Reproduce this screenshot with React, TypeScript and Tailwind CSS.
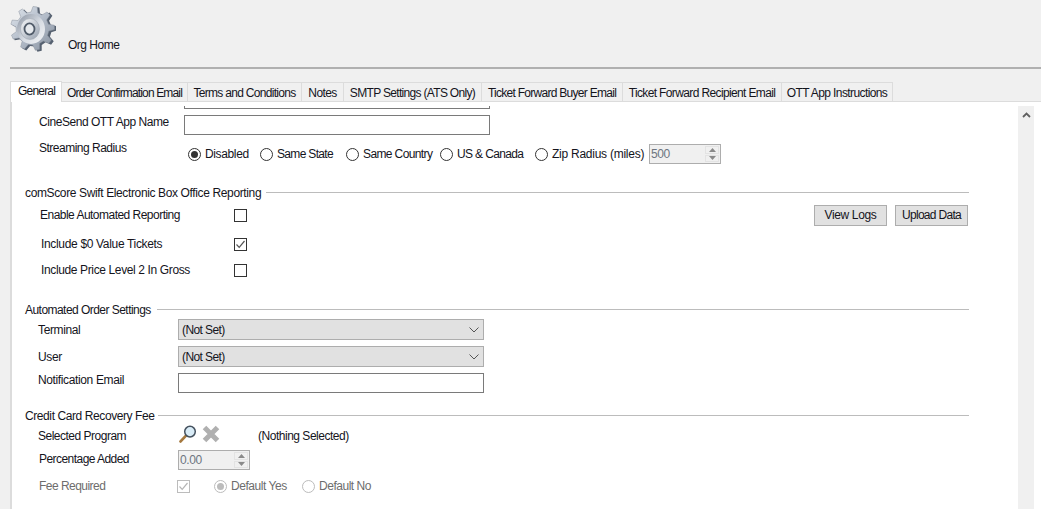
import React from "react";

const tabs: [string, string, string][] = [
  ["Order Confirmation Email", "w-[126px]", "tracking-[-0.85px]"],
  ["Terms and Conditions", "w-[114px]", "tracking-[-0.7px]"],
  ["Notes", "w-[42px]", "tracking-[-0.6px]"],
  ["SMTP Settings (ATS Only)", "w-[138px]", "tracking-[-0.68px]"],
  ["Ticket Forward Buyer Email", "w-[141px]", "tracking-[-0.72px]"],
  ["Ticket Forward Recipient Email", "w-[159px]", "tracking-[-0.63px]"],
  ["OTT App Instructions", "w-[111px]", "tracking-[-0.6px]"],
];

function gearPath(cx: number, cy: number, r1: number, r2: number, n: number, rot: number) {
  const pts: string[] = [];
  for (let i = 0; i < n; i++) {
    const a = rot + (i * 2 * Math.PI) / n;
    const s = (2 * Math.PI) / n;
    const p = (ang: number, r: number) => `${(cx + r * Math.cos(ang)).toFixed(2)} ${(cy + r * Math.sin(ang)).toFixed(2)}`;
    pts.push(p(a - s * 0.3, r1), p(a - s * 0.14, r2), p(a + s * 0.14, r2), p(a + s * 0.3, r1));
  }
  return "M" + pts.join(" L") + " Z";
}

function Gear() {
  return (
    <svg width="46" height="48" viewBox="0 0 46 48" className="shrink-0">
      <defs>
        <linearGradient id="g1" x1="0" y1="0" x2="1" y2="1">
          <stop offset="0" stopColor="#dfe5ec" />
          <stop offset="0.5" stopColor="#b3bcc9" />
          <stop offset="1" stopColor="#87919f" />
        </linearGradient>
        <linearGradient id="g2" x1="0" y1="0" x2="1" y2="1">
          <stop offset="0" stopColor="#8a93a1" />
          <stop offset="0.55" stopColor="#d8dde4" />
          <stop offset="1" stopColor="#f4f5f7" />
        </linearGradient>
        <linearGradient id="g3" x1="0" y1="0" x2="1" y2="1">
          <stop offset="0" stopColor="#f7f8fa" />
          <stop offset="1" stopColor="#96a0ae" />
        </linearGradient>
      </defs>
      <path d={gearPath(24.5, 24.5, 17, 22.5, 9, -1.45)} fill="#566170" />
      <path d={gearPath(22.5, 23.5, 16.5, 22, 9, -1.45)} fill="url(#g1)" stroke="#8a929e" strokeWidth="0.5" />
      <ellipse cx="21" cy="24" rx="14" ry="15" fill="url(#g2)" />
      <ellipse cx="20" cy="24" rx="9.5" ry="10.5" fill="url(#g3)" stroke="#a2a9b4" strokeWidth="0.6" />
      <ellipse cx="19.5" cy="24" rx="5" ry="5.6" fill="#e6e9ed" stroke="#4f5a68" strokeWidth="1.8" />
    </svg>
  );
}

function Radio({ on, dim }: { on?: boolean; dim?: boolean }) {
  return (
    <span className={`w-[13px] h-[13px] shrink-0 rounded-full border flex items-center justify-center bg-white ${dim ? "border-[#bcbcbc]" : "border-[#333333]"}`}>
      {on && <span className={`w-[7px] h-[7px] rounded-full ${dim ? "bg-[#bcbcbc]" : "bg-[#333333]"}`} />}
    </span>
  );
}

function Check({ on, dim }: { on?: boolean; dim?: boolean }) {
  return (
    <span className={`w-[13px] h-[13px] shrink-0 border flex items-center justify-center bg-white ${dim ? "border-[#bcbcbc]" : "border-[#333333]"}`}>
      {on && (
        <svg width="11" height="11" viewBox="0 0 11 11" fill="none">
          <path d="M1.5 5.5 L4.2 8.3 L9.5 2" stroke={dim ? "#b5b5b5" : "#555555"} strokeWidth="1.2" />
        </svg>
      )}
    </span>
  );
}

function Spinner({ value }: { value: string }) {
  return (
    <div className="w-[72px] h-[20px] border border-[#adadad] bg-[#f0f0f0] flex items-center shrink-0">
      <span className="flex-1 pl-[1px] text-[#6d7580]">{value}</span>
      <span className="w-[14px] h-[16px] mr-[1px] flex flex-col gap-[1px]">
        <span className="flex-1 border border-[#e3e3e3] flex items-center justify-center">
          <svg width="7" height="4" viewBox="0 0 7 4"><path d="M0 4 L3.5 0 L7 4 Z" fill="#8a8a8a" /></svg>
        </span>
        <span className="flex-1 border border-[#e3e3e3] flex items-center justify-center">
          <svg width="7" height="4" viewBox="0 0 7 4"><path d="M0 0 L3.5 4 L7 0 Z" fill="#8a8a8a" /></svg>
        </span>
      </span>
    </div>
  );
}

function Heading({ text, mt, lineGap, track }: { text: string; mt: string; lineGap: string; track?: string }) {
  return (
    <div className={`flex items-center h-[14px] ml-[13px] w-[944px] ${mt}`}>
      <span className={`whitespace-nowrap ${track ?? ""}`}>{text}</span>
      <span className={`flex-1 h-px -mt-[2px] bg-[#bcbcbc] ${lineGap}`} />
    </div>
  );
}

function Select() {
  return (
    <div className="w-[306px] h-[21px] border border-[#adadad] bg-[#e1e1e1] flex items-center pl-[3px] pr-[4px] justify-between">
      <span className="tracking-[-0.6px]">(Not Set)</span>
      <svg width="10" height="6" viewBox="0 0 10 6" fill="none"><path d="M0.5 0.5 L5 5 L9.5 0.5" stroke="#555555" strokeWidth="1" /></svg>
    </div>
  );
}

function WinButton({ text, track }: { text: string; track?: string }) {
  return (
    <div className={`w-[73px] h-[21px] border border-[#adadad] bg-[#e1e1e1] flex items-center justify-center pb-[1px] ${track ?? ""}`}>{text}</div>
  );
}

export default function App() {
  return (
    <div
      className="w-[1041px] h-[509px] overflow-hidden bg-[#f0f0f0] flex flex-col text-[12px] leading-[14px] tracking-[-0.37px] text-[#14141c]"
      style={{ fontFamily: '"Liberation Sans", Arial, sans-serif' }}
    >
      <div className="h-[67px] shrink-0 flex pl-[10px] pt-[5px]">
        <Gear />
        <span className="ml-[12px] mt-[33px] tracking-[-0.5px]">Org Home</span>
      </div>
      <div className="h-[2px] shrink-0 ml-[10px] bg-[#b0b0b0]" />
      <div className="h-[32px] shrink-0 ml-[10px] flex items-end">
        <div className="w-[52px] h-[21px] bg-white border-t border-l border-r border-[#dcdcdc] pl-[7px] pt-[2px] relative top-[1px] z-10 tracking-[-0.8px]">General</div>
        {tabs.map(([t, w, track]) => (
          <div key={t} className={`${w} ${track} h-[19px] border-t border-r border-[#dcdcdc] flex items-center justify-center whitespace-nowrap pt-[1px]`}>{t}</div>
        ))}
      </div>
      <div className="flex-1 min-h-0 ml-[10px] bg-white border-t border-l-2 border-[#dcdcdc] flex">
        <div className="flex-1 min-w-0 flex flex-col">
          <div className="ml-[172px] mt-[4px] w-[306px] h-[3px] border-x border-b border-[#7a7a7a]" />

          <div className="mt-[6px] flex items-center h-[20px]">
            <span className="pl-[27px] w-[172px] -mt-[7px] tracking-[-0.45px]">CineSend OTT App Name</span>
            <div className="w-[306px] h-[20px] border border-[#7a7a7a] bg-white" />
          </div>

          <div className="mt-[9px] flex items-center h-[20px]">
            <span className="pl-[27px] w-[176px] -mt-[12px] tracking-[-0.5px]">Streaming Radius</span>
            <span className="flex items-center w-[72px] gap-[4px]"><Radio on /><span>Disabled</span></span>
            <span className="flex items-center w-[86px] gap-[4px]"><Radio /><span className="tracking-[-0.67px]">Same State</span></span>
            <span className="flex items-center w-[94px] gap-[4px]"><Radio /><span className="tracking-[-0.62px]">Same Country</span></span>
            <span className="flex items-center w-[95px] gap-[4px]"><Radio /><span className="tracking-[-0.64px]">US &amp; Canada</span></span>
            <span className="flex items-center w-[114px] gap-[4px] whitespace-nowrap"><Radio /><span className="tracking-[-0.25px]">Zip Radius (miles)</span></span>
            <Spinner value="500" />
          </div>

          <Heading text="comScore Swift Electronic Box Office Reporting" mt="mt-[22px]" lineGap="ml-[5px]" />

          <div className="mt-[5px] flex items-center h-[21px] w-[956px]">
            <span className="pl-[28px] w-[222px] -mt-[2px] tracking-[-0.52px]">Enable Automated Reporting</span>
            <Check />
            <span className="ml-auto flex gap-[8px]">
              <WinButton text="View Logs" />
              <WinButton text="Upload Data" track="tracking-[-0.7px]" />
            </span>
          </div>

          <div className="mt-[11px] flex items-center h-[14px]">
            <span className="pl-[29px] w-[222px] tracking-[-0.33px]">Include $0 Value Tickets</span>
            <Check on />
          </div>

          <div className="mt-[12px] flex items-center h-[14px]">
            <span className="pl-[29px] w-[222px]">Include Price Level 2 In Gross</span>
            <Check />
          </div>

          <Heading text="Automated Order Settings" mt="mt-[26px]" lineGap="ml-[6px]" track="tracking-[-0.54px]" />

          <div className="mt-[2px] flex items-center">
            <span className="pl-[26px] w-[166px]">Terminal</span>
            <Select />
          </div>
          <div className="mt-[6px] flex items-center">
            <span className="pl-[26px] w-[166px]">User</span>
            <Select />
          </div>
          <div className="mt-[6px] flex items-center h-[20px]">
            <span className="pl-[26px] w-[166px] -mt-[6px]">Notification Email</span>
            <div className="w-[306px] h-[20px] border border-[#7a7a7a] bg-white" />
          </div>

          <Heading text="Credit Card Recovery Fee" mt="mt-[16px]" lineGap="ml-[3px]" track="tracking-[-0.41px]" />

          <div className="mt-[5px] flex items-center h-[16px]">
            <span className="pl-[26px] w-[166px] tracking-[-0.5px]">Selected Program</span>
            <svg width="18" height="18" viewBox="0 0 18 18" className="ml-[1px] -mt-[4px] shrink-0">
              <path d="M1.6 16.4 L7 10.6" stroke="#a5793f" strokeWidth="2.8" strokeLinecap="round" />
              <circle cx="11" cy="6.6" r="5.3" fill="#d9ecf7" stroke="#45525f" strokeWidth="1.5" />
            </svg>
            <svg width="18" height="18" viewBox="0 0 18 18" className="ml-[5px] -mt-[4px] shrink-0">
              <path d="M2.5 2.5 L15.5 15.5 M15.5 2.5 L2.5 15.5" stroke="#b0b0b0" strokeWidth="5" />
            </svg>
            <span className="ml-[38px] tracking-[-0.48px]">(Nothing Selected)</span>
          </div>

          <div className="mt-[6px] flex items-center h-[20px]">
            <span className="pl-[27px] w-[166px] -mt-[2px] tracking-[-0.55px]">Percentage Added</span>
            <Spinner value="0.00" />
          </div>

          <div className="mt-[9px] flex items-center h-[14px] text-[#6d6d6d]">
            <span className="pl-[27px] w-[165px] -mt-[1px] tracking-[-0.53px]">Fee Required</span>
            <Check on dim />
            <span className="ml-[24px] flex items-center w-[88px] gap-[4px]"><Radio on dim /><span className="tracking-[-0.45px]">Default Yes</span></span>
            <span className="flex items-center gap-[4px]"><Radio dim /><span className="tracking-[-0.47px]">Default No</span></span>
          </div>
        </div>
        <div className="w-[16px] shrink-0 mt-[4px] mr-[7px] bg-[#f0f0f0] flex justify-center pt-[6px]">
          <svg width="9" height="6" viewBox="0 0 9 6" fill="none"><path d="M1 5 L4.5 1.5 L8 5" stroke="#606060" strokeWidth="1.8" /></svg>
        </div>
      </div>
    </div>
  );
}
